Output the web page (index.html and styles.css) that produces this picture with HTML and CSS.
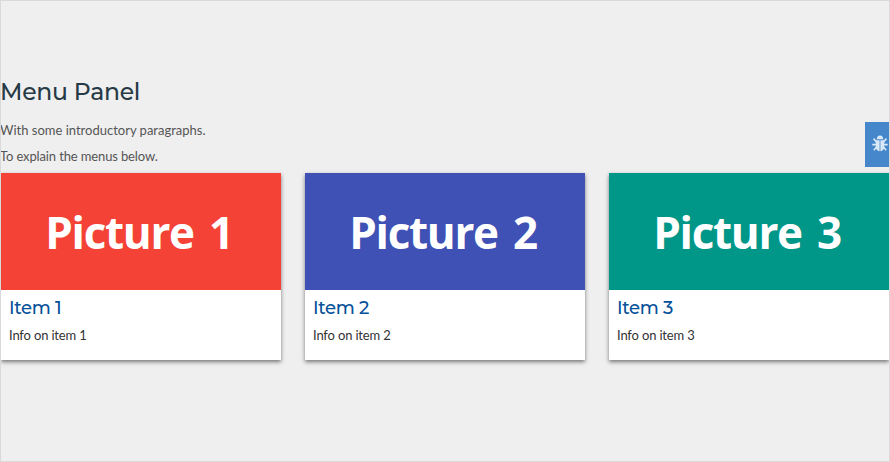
FILE: index.html
```
<!DOCTYPE html>
<html lang="en">
<head>
<meta charset="utf-8">
<title>Menu Panel</title>
<link rel="stylesheet" href="styles.css">
</head>
<body>
<main class="panel">
  <h1 class="title">Menu Panel</h1>
  <p class="intro">With some introductory paragraphs.</p>
  <p class="intro second">To explain the menus below.</p>
  <div class="cards">
    <article class="card">
      <div class="picture red"><span>Picture 1</span></div>
      <div class="info"><h2>Item 1</h2><p>Info on item 1</p></div>
    </article>
    <article class="card">
      <div class="picture blue"><span>Picture 2</span></div>
      <div class="info"><h2>Item 2</h2><p>Info on item 2</p></div>
    </article>
    <article class="card">
      <div class="picture teal"><span>Picture 3</span></div>
      <div class="info"><h2>Item 3</h2><p>Info on item 3</p></div>
    </article>
  </div>
  <div class="debug">
    <svg width="16" height="17" viewBox="0 0 16 16" preserveAspectRatio="none" fill="none" stroke="#d9e8f7" stroke-width="1.6">
      <path d="M4.800 4.100a3.200 3.700 0 0 1 6.400 0z" fill="#d9e8f7" stroke="none"/>
      <path d="M3.700 5h3.900v10.200C5.200 14.800 3.700 13.200 3.700 11zM12.300 5H8.400v10.200c2.400-.4 3.900-2 3.900-4.200z" fill="#d9e8f7" stroke="none"/>
      <path d="M4.300 6.200 1.500 3.500M11.700 6.200l2.800-2.700M4 9H.3M12 9h3.700M4.300 11.500l-2.500 2.800M11.700 11.500l2.500 2.800"/>
    </svg>
  </div>
</main>
</body>
</html>
```
FILE: styles.css
```
* { box-sizing: border-box; }
body { margin: 0; }
h1, h2, p { margin: 0; }
.panel {
  position: relative;
  width: 890px;
  height: 462px;
  padding-top: 76px;
  overflow: hidden;
  border: 1px solid #d9d9d9;
  background: #efefef;
  font: 13px/26px Lato, sans-serif;
}
.title {
  height: 40px;
  margin-left: -1px;
  color: #263a46;
  font: 500 23.5px/30px Montserrat, Inter, sans-serif;
  letter-spacing: -0.25px;
}
.intro {
  margin-left: -1px;
  color: #555;
}
.second { letter-spacing: -0.13px; }
.cards {
  display: grid;
  grid-template-columns: repeat(3, 280px);
  gap: 24px;
  margin-top: 4px;
}
.card {
  height: 187px;
  background: #fff;
  box-shadow: 0 2px 4px rgba(0, 0, 0, 0.5);
}
.picture {
  display: flex;
  align-items: center;
  justify-content: center;
  height: 116.5px;
  padding: 1px 4px 0 0;
  color: #fff;
  font: 700 44px/60px "Open Sans", sans-serif;
  letter-spacing: -1.3px;
  word-spacing: 5px;
  white-space: pre;
}
.red { background: #f44336; }
.blue { background: #3f51b5; }
.teal { background: #009688; }
.info { padding: 6.5px 8px; }
.info h2 {
  color: #05509a;
  font: 500 18px/24px Montserrat, Inter, sans-serif;
  letter-spacing: -0.3px;
}
.info p {
  margin-top: 2px;
  color: #333;
  letter-spacing: -0.16px;
}
.debug {
  position: absolute;
  top: 121px;
  right: 0;
  width: 24px;
  height: 44.5px;
  padding: 13px 0 0 6.5px;
  background: #4587ca;
}
.debug svg { display: block; }
```
